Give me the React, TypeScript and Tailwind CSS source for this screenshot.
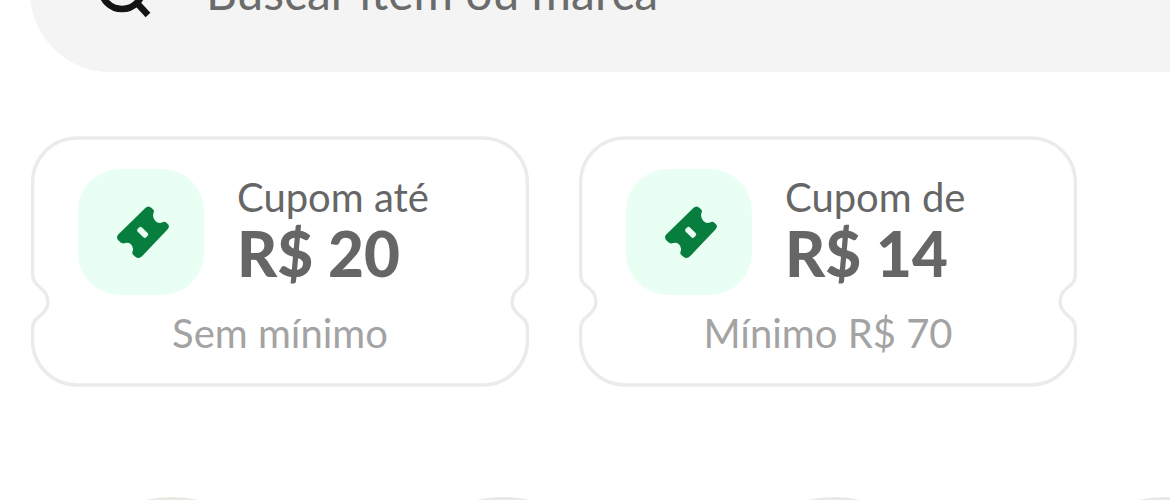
interface Coupon {
  id: number;
  label: string;
  value: string;
  minimum: string;
}

const coupons: Coupon[] = [
  { id: 1, label: "Cupom até", value: "R$ 20", minimum: "Sem mínimo" },
  { id: 2, label: "Cupom de", value: "R$ 14", minimum: "Mínimo R$ 70" },
];

const categories = [
  { id: 1, border: "border-[#e9e9e2]" },
  { id: 2, border: "border-[#e8e7e9]" },
  { id: 3, border: "border-[#e8e8e8]" },
  { id: 4, border: "border-[#e8e8e8]" },
];

function SearchIcon() {
  return (
    <svg className="size-16 shrink-0" viewBox="0 0 64 64" fill="none" stroke="#141414" strokeWidth="6.5" aria-hidden="true">
      <circle cx="28" cy="28" r="21" />
      <path d="M42 42 L54 55" />
    </svg>
  );
}

function TicketIcon() {
  return (
    <svg className="size-[54px] overflow-visible" viewBox="43 45 162 162" aria-hidden="true">
      <path
        fill="#087e3e"
        d="M55 134 L137 54 Q146 45 156 54 L161 59 Q165 63 161 70 Q158 84 167 93 Q177 103 190 96 Q196 93 200 98 L205 103 Q211 110 204 118 L127 199 Q117 208 107 200 L101 195 Q96 190 99 184 Q103 171 93 162 Q85 156 73 160 Q67 161 62 157 L55 150 Q49 142 55 134Z"
      />
      <rect x="111" y="118" width="36" height="18" rx="6" fill="#eafff4" transform="rotate(45 129 127)" />
    </svg>
  );
}

// Borda do cupom com o recorte nas laterais
function CouponOutline() {
  return (
    <svg className="absolute inset-0 size-full" viewBox="0 0 498 250" fill="none" stroke="#ebebeb" strokeWidth="3.5" aria-hidden="true">
      <path d="M47 1.5 H451 C477 1.5 496.500 21 496.500 47 V137 C496.500 143 495 146 491 149 C485 154 481 158 481 165 C481 172 485 176 491 181 C495 184 496.500 187 496.500 193 V203 C496.500 229 477 248.500 451 248.500 H47 C21 248.500 1.500 229 1.500 203 V193 C1.500 187 3 184 7 181 C13 176 17 172 17 165 C17 158 13 154 7 149 C3 146 1.500 143 1.500 137 V47 C1.500 21 21 1.500 47 1.500Z" />
    </svg>
  );
}

export default function App() {
  return (
    <div className="h-screen overflow-hidden bg-white font-['Lato',sans-serif] text-[#666666]">
      <header className="overflow-hidden pl-[30px]">
        <label className="-mt-[88px] flex h-40 items-center gap-12 rounded-l-[80px] bg-[#f4f4f4] pl-16">
          <SearchIcon />
          <input
            type="search"
            aria-label="Buscar item ou marca"
            placeholder="Buscar item ou marca"
            className="min-w-0 flex-1 bg-transparent text-[48px] leading-[60px] outline-none placeholder:text-[#6b6b6b]"
          />
        </label>
      </header>

      <main>
        <section className="flex gap-[50px] pt-16 pl-[31px]">
          {coupons.map((coupon) => (
            <article key={coupon.id} className="relative w-[498px] shrink-0 px-[47px] pt-[33px] pb-8">
              <CouponOutline />
              <div className="flex items-start gap-[33px]">
                <div className="flex size-[126px] items-center justify-center rounded-[42px] bg-[#eafff4]">
                  <TicketIcon />
                </div>
                <div className="pt-1">
                  <p className="text-[40px] leading-[48px]">{coupon.label}</p>
                  <p className="text-[62px] leading-[64px] font-black">{coupon.value}</p>
                </div>
              </div>
              <p className="mt-4 text-center text-[40px] leading-[44px] text-[#a3a3a3]">{coupon.minimum}</p>
            </article>
          ))}
        </section>

        <section className="flex gap-[91px] pt-[110px] pl-[52px]">
          {categories.map((category) => (
            <div key={category.id} className={`size-60 shrink-0 rounded-full border-4 ${category.border}`} />
          ))}
        </section>
      </main>
    </div>
  );
}
